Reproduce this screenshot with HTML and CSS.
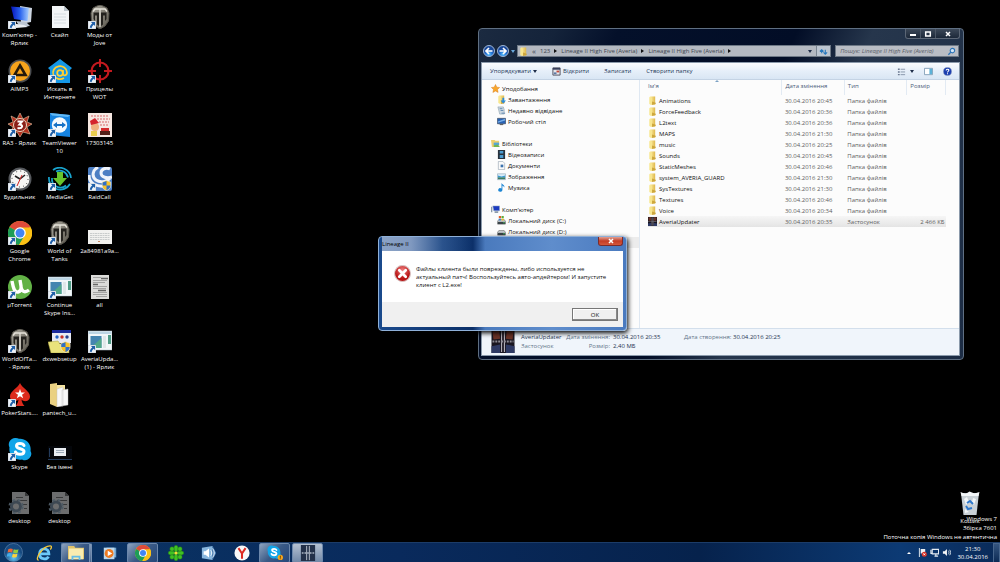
FILE: index.html
```
<!DOCTYPE html>
<html lang="uk">
<head>
    <meta charset="UTF-8">
    <meta name="viewport" content="width=device-width, initial-scale=1.0">
    <title>Робочий стіл</title>
    <link rel="stylesheet" href="styles.css">
</head>
<body>
    <!-- Shared icons -->
    <svg class="defs" width="0" height="0" aria-hidden="true">
        <defs>
            <linearGradient id="gFolder" x1="0" x2="1"><stop offset="0" stop-color="#fff0a8"/><stop offset="1" stop-color="#dfb84a"/></linearGradient>
            <linearGradient id="gScreen" x1="0" x2="1"><stop offset="0" stop-color="#0613b8"/><stop offset=".5" stop-color="#2a63ee"/><stop offset="1" stop-color="#a9d0ff"/></linearGradient>
            <linearGradient id="gSteel" x1="0" x2="1" y2="1"><stop offset="0" stop-color="#a9a69c"/><stop offset="1" stop-color="#5d594f"/></linearGradient>
            <radialGradient id="gBlue" cy=".8"><stop offset="0" stop-color="#5cc4ff"/><stop offset=".6" stop-color="#2270d4"/><stop offset="1" stop-color="#1a4898"/></radialGradient>
            <radialGradient id="gStart" cy=".8"><stop offset="0" stop-color="#5fc4f4"/><stop offset="1" stop-color="#174a80"/></radialGradient>
            <radialGradient id="gRed" cy=".3"><stop offset="0" stop-color="#f08080"/><stop offset="1" stop-color="#b81414"/></radialGradient>
        </defs>
        <symbol id="shortcut" viewBox="0 0 8 8"><path fill="#eef3f8" stroke="#9aa6b4" stroke-width=".5" d="M0 0h8v8H0z"/><path fill="#1f5fa8" d="M3 1h4v4L5.700 3.800C4.500 4.800 4 5.600 3.600 7.200L1.700 6.600C2 4.800 2.900 3.500 4.300 2.400z"/></symbol>
        <symbol id="tank" viewBox="0 0 24 24"><path fill="url(#gSteel)" stroke="#55524a" d="M5 3l4-2 3-1 3 1 4 2 2 5-.5 8-3.500 5L12 24l-5-3-3.500-5L3 8z"/><path fill="#24221e" d="M5.500 7.500H11V21l-2-1.500V10.500H7V16l-1.500-2zM18.500 7.500H13V21l2-1.500V10.500h2V16l1.500-2z"/><path stroke="#e6e3da" stroke-width="1.300" d="M5 6.500l2-2.500h10l2 2.500M12 4v18" fill="none"/></symbol>
        <symbol id="chrome" viewBox="0 0 24 24"><circle cx="12" cy="12" r="12" fill="#fbc116"/><path fill="#de4a3a" d="M12 12L1.600 6A12 12 0 0 1 22.400 6z"/><path fill="#1d9d58" d="M1.600 6A12 12 0 0 0 11 24l6-9-5-3z"/><path fill="#fbc116" d="M12 6.500h10.700A12 12 0 0 1 11 24l5.500-9.500z"/><circle cx="12" cy="12" r="5.800" fill="#fff"/><circle cx="12" cy="12" r="4.500" fill="#4285f4"/></symbol>
        <symbol id="skype" viewBox="0 0 24 24"><path fill="#12a5e8" d="M7 1a6 6 0 0 1 4 .8A10.500 10.500 0 0 1 22.500 14 6.300 6.300 0 0 1 14 22.500 10.500 10.500 0 0 1 1.500 10.500 6.500 6.500 0 0 1 7 1z"/><path fill="none" stroke="#fff" stroke-width="3" stroke-linecap="round" d="M16 8.500C15 6 8.500 5.500 8.500 9c0 3.500 7.500 2 7.500 5.500 0 3.800-7.500 3.500-8.500.5"/></symbol>
        <symbol id="appwin" viewBox="0 0 24 24"><path fill="#f2f7f9" stroke="#aebfc9" stroke-width=".5" d="M0 2h24v19H0z"/><path fill="#bcd5e4" d="M.5 2.500h23v2.500H.5z"/><path fill="#4585b0" d="M2.500 7h11v12h-11z"/><path fill="#52a889" d="M2.500 19L13.500 9v10z"/><path fill="#dfe7e9" d="M15 7h3v12h-3z"/><path fill="#4f9c86" d="M20 6h3v9h-3z"/></symbol>
        <symbol id="shield" viewBox="0 0 12 13"><path fill="#f6c22a" stroke="#e8edf2" stroke-width=".7" d="M6 .5l5 2v4c0 3-2 5-5 6-3-1-5-3-5-6v-4z"/><path fill="#2f6fc8" d="M6 1.200v5.300H1.400v-3.600zM6 6.500h4.600C10.500 9 9 11 6 12z"/></symbol>
        <symbol id="gearfile" viewBox="0 0 24 24"><path fill="#b4b6b8" d="M4 1h13l4 4v18H4z"/><path fill="#5e6062" d="M17 1v4h4zM8 6h7v1H8zM9 9h10v1H9zM14 13h5v1h-5zM16 17h3v1h-3z"/><circle cx="8" cy="15.500" r="4.500" fill="none" stroke="#66798a" stroke-width="3"/><circle cx="8" cy="15.500" r="6.700" fill="none" stroke="#8196a8" stroke-width="1.800" stroke-dasharray="2.700 2.800"/></symbol>
        <symbol id="folder" viewBox="0 0 10 10"><path fill="url(#gFolder)" d="M2 .5h6v9H2z"/><path fill="#f8e68e" d="M1.500 1l3 1v8l-3-1z"/><path fill="#cda63c" d="M4.500 6l4 1.500V9L4.500 10z"/></symbol>
        <symbol id="lineage" viewBox="0 0 24 24"><path fill="#1a1620" d="M0 0h24v24H0z"/><path fill="#6a3226" d="M1 1l7-1 1 9-7 1zM23 1l-7-1-1 9 7 1z"/><path fill="#2f3a64" d="M0 17l9-2v9H0zM24 17l-9-2v9h9z"/><path stroke="#b0acb4" stroke-width="1.200" d="M10.500 1v22M13.500 1v22"/><path stroke="#8d8b94" stroke-dasharray="2 1" stroke-width="2" d="M1 12h22"/></symbol>
        <symbol id="disk" viewBox="0 0 10 10"><path fill="#c9ced2" stroke="#555" stroke-width=".6" d="M.5 6l1.500-2h6l1.500 2v3h-9z"/><path fill="#3a4348" d="M1 6.500h8V9H1z"/><path fill="#48d05a" d="M7 7h1.500v1H7z"/></symbol>
    </svg>

    <main class="desktop">
        <!-- Desktop shortcuts, filled column by column -->
        <div class="shortcuts">
            <a class="shortcut" href="#"><span class="pic"><svg class="big" viewBox="0 0 24 24"><path fill="#cdd6e2" d="M12 1l12 2-1 14-10 2z"/><path fill="url(#gScreen)" d="M3 1.500l18 1.500-1.500 13L6 14z"/><path fill="#bcc6d2" d="M8 16l10 1 4 4-10 1z"/><path fill="#e8edf2" d="M2 18l14 2 4 2-12 1z"/></svg><svg class="arrow"><use href="#shortcut"/></svg></span>Комп'ютер - Ярлик</a>
            <a class="shortcut" href="#"><span class="pic"><svg class="big" viewBox="0 0 24 24"><circle cx="12" cy="12" r="11.500" fill="#4b4d50"/><circle cx="12" cy="12" r="10" fill="#f7a41c"/><path fill="none" stroke="#241a0c" stroke-width="2.600" d="M12 6.500L17.500 16h-11z"/></svg><svg class="arrow"><use href="#shortcut"/></svg></span>AIMP3</a>
            <a class="shortcut" href="#"><span class="pic"><svg class="big" viewBox="0 0 24 24"><path fill="#b3311f" stroke="#e8c9a8" stroke-width=".6" d="M12 0l3 6 6-3-2 6 5 2-5 3 3 7-7-2-3 5-3-5-7 2 3-7-5-3 5-2-2-6 6 3z"/><circle cx="12" cy="12" r="6.500" fill="#8b1f18" stroke="#ead8c0"/><path fill="none" stroke="#fff" stroke-width="2" d="M9.500 8.500h4.500l-2.500 3c4 0 3.500 4.500-2 3.500"/></svg><svg class="arrow"><use href="#shortcut"/></svg></span>RA3 - Ярлик</a>
            <a class="shortcut" href="#"><span class="pic"><svg class="big" viewBox="0 0 24 24"><circle cx="12" cy="12" r="11.500" fill="#55585c"/><circle cx="12" cy="12" r="9.500" fill="#f6f6f4"/><circle cx="12" cy="12" r="8" fill="none" stroke="#333" stroke-dasharray="1 3.190"/><path stroke="#222" stroke-width="1.600" d="M12 12L7 9M12 12l5-4"/><path stroke="#d02020" d="M14 8l-5 11"/></svg><svg class="arrow"><use href="#shortcut"/></svg></span>Будильник</a>
            <a class="shortcut" href="#"><span class="pic"><svg class="big"><use href="#chrome"/></svg><svg class="arrow"><use href="#shortcut"/></svg></span>Google Chrome</a>
            <a class="shortcut" href="#"><span class="pic"><svg class="big" viewBox="0 0 24 24"><circle cx="12" cy="12" r="12" fill="#62b246"/><path fill="none" stroke="#fff" stroke-width="3.400" d="M4 6c1 5 2 12 6 11 3-.8 3.500-3 3-6l-1-6M13 12c1 5 4 6 8 3"/></svg><svg class="arrow"><use href="#shortcut"/></svg></span>µTorrent</a>
            <a class="shortcut" href="#"><span class="pic"><svg class="big"><use href="#tank"/></svg><svg class="arrow"><use href="#shortcut"/></svg></span>WorldOfTa...<br>- Ярлик</a>
            <a class="shortcut" href="#"><span class="pic"><svg class="big" viewBox="0 0 24 24"><path fill="#dd2a1c" d="M12 0c2 5 10 8 10 13.500 0 5-6 6-8.500 3 .3 3 1.500 5 3 6.500h-9c1.500-1.500 2.700-3.500 3-6.500-2.500 3-8.500 2-8.500-3C2 8 10 5 12 0z"/><path fill="#fff" d="M12 6l1.300 3.500H17l-3 2.200 1.200 3.600-3.200-2.100-3.200 2.100L10 11.700 7 9.500h3.700z"/></svg><svg class="arrow"><use href="#shortcut"/></svg></span>PokerStars....</a>
            <a class="shortcut" href="#"><span class="pic"><svg class="big"><use href="#skype"/></svg><svg class="arrow"><use href="#shortcut"/></svg></span>Skype</a>
            <a class="shortcut dim" href="#"><span class="pic"><svg class="big"><use href="#gearfile"/></svg></span>desktop</a>

            <a class="shortcut" href="#"><span class="pic"><svg class="big" viewBox="0 0 24 24"><path fill="#f2f5f7" d="M4 1h12l5 5v17H4z"/><path fill="#bcc5cc" d="M16 1v5h5z"/><path stroke="#d5dce1" d="M6 9h12M6 12h12M6 15h12M6 18h12"/></svg></span>Скайп</a>
            <a class="shortcut" href="#"><span class="pic"><svg class="big" viewBox="0 0 24 24"><path fill="#1497e6" d="M12 0l12 9-2 2v13H2V11L0 9z"/><circle cx="12" cy="14" r="2.800" fill="none" stroke="#ffcf32" stroke-width="1.700"/><path fill="none" stroke="#ffcf32" stroke-width="1.700" d="M15 11v4c0 2 4 2 4-1.500a7 6.500 0 1 0-3 5.500"/></svg><svg class="arrow"><use href="#shortcut"/></svg></span>Искать в Интернете</a>
            <a class="shortcut" href="#"><span class="pic"><svg class="big" viewBox="0 0 24 24"><path fill="#1583e0" d="M2 0l20 2v22L2 22z"/><path fill="#62b9f5" d="M2 0l20 2-2 2L4 2.500z"/><circle cx="11.500" cy="12" r="7.700" fill="#f4fafe"/><path fill="#1672c6" d="M5 12l4-3v2h5V9l4 3-4 3v-2H9v2z"/></svg><svg class="arrow"><use href="#shortcut"/></svg></span>TeamViewer 10</a>
            <a class="shortcut" href="#"><span class="pic"><svg class="big" viewBox="0 0 24 24"><g fill="none" stroke="#19a4ce" stroke-width="1.700"><path d="M5 3a11.300 11.300 0 0 1 18 8M22 17A11.300 11.300 0 0 1 1 10"/><path d="M8 4.500a8.500 8.500 0 0 1 12 6M18 18.500A8.500 8.500 0 0 1 4 11"/></g><path fill="#67c42c" d="M9 5h6v6h4l-7 8-7-8h4z"/></svg><svg class="arrow"><use href="#shortcut"/></svg></span>MediaGet</a>
            <a class="shortcut" href="#"><span class="pic"><svg class="big"><use href="#tank"/></svg><svg class="arrow"><use href="#shortcut"/></svg></span>World of Tanks</a>
            <a class="shortcut" href="#"><span class="pic"><svg class="big"><use href="#appwin"/></svg><svg class="arrow"><use href="#shortcut"/></svg></span>Continue Skype Ins...</a>
            <a class="shortcut" href="#"><span class="pic"><svg class="big" viewBox="0 0 24 24"><path fill="#e8eaf2" d="M4 1h19v13H4z"/><path fill="#1b2a9c" d="M4 1h19v3H4z"/><circle cx="9" cy="8" r="1.700" fill="#2464c8"/><circle cx="14" cy="8" r="1.700" fill="#c83028"/><circle cx="19" cy="8" r="1.700" fill="#25408c"/><path fill="#e9e27c" stroke="#a79f3c" stroke-width=".5" d="M0 13l10-1 2 3h9v9H3z"/><svg x="12" y="12" width="11" height="12"><use href="#shield"/></svg></svg></span>dxwebsetup</a>
            <a class="shortcut" href="#"><span class="pic"><svg class="big" viewBox="0 0 24 24"><path fill="#ead182" d="M2 1l7-1v24l-7-3z"/><path fill="#f6e4a0" d="M9 2h8v18l-8 4z"/><path fill="#f8f8f8" stroke="#bbb" stroke-width=".4" d="M9 6l6-2v19l-6 1zM14 7l6-1v16l-6 1z"/></svg></span>pantech_u...</a>
            <a class="shortcut" href="#"><span class="pic"><svg class="big" viewBox="0 0 24 24"><path fill="#04060a" d="M0 9h24v13H0z"/><path fill="#e9edf2" d="M6 11h12v8H6z"/><path fill="#9eabb9" d="M8 13h8v1H8zM8 15h8v1H8z"/><path fill="#243c5c" d="M0 22h24v1H0zM1 11h1v9H1z"/></svg></span>Без імені</a>
            <a class="shortcut dim" href="#"><span class="pic"><svg class="big"><use href="#gearfile"/></svg></span>desktop</a>

            <a class="shortcut" href="#"><span class="pic"><svg class="big"><use href="#tank"/></svg><svg class="arrow"><use href="#shortcut"/></svg></span>Моды от<br>Jove</a>
            <a class="shortcut" href="#"><span class="pic"><svg class="big" viewBox="0 0 24 24"><g fill="none" stroke="#c3191e"><circle cx="12" cy="12" r="8.500" stroke-width="2.200"/><path stroke-width="2" d="M12 0v8M12 16v8M0 12h8M16 12h8"/></g></svg><svg class="arrow"><use href="#shortcut"/></svg></span>Прицелы WOT</a>
            <a class="shortcut" href="#"><span class="pic"><svg class="big" viewBox="0 0 24 24"><path fill="#f6e8e2" d="M0 0h24v24H0z"/><path stroke="#d8686a" stroke-width="1.200" stroke-dasharray="2 1" d="M3 3h17M9 6h13M11 9h10M12 12h9"/><circle cx="7" cy="14" r="4" fill="#efb17e"/><path fill="#d4242c" d="M2 8l5-3 4 5-8 2z"/><path fill="#d32c2c" d="M13 15h8v4h-8z"/><path fill="#542018" d="M12 18h10v4H12z"/><path fill="#e8cd4f" d="M3 18h6v5H3z"/></svg></span>17303145</a>
            <a class="shortcut" href="#"><span class="pic"><svg class="big" viewBox="0 0 24 24"><rect width="24" height="24" rx="2" fill="#4d7fc4"/><path fill="none" stroke="#f0f4fb" stroke-width="3" d="M10 0C5 3 3 9 8 13c4 3 11 2 14-2M22 2c-4-2-9 0-9 4s6 6 11 4M1 8c0 9 8 12 16 11"/><svg x="13" y="13" width="11" height="11"><use href="#shield"/></svg></svg><svg class="arrow"><use href="#shortcut"/></svg></span>RaidCall</a>
            <a class="shortcut" href="#"><span class="pic"><svg class="big" viewBox="0 0 24 24"><path fill="#f1f1ef" d="M0 9h24v14H0z"/><path stroke="#c9cccc" stroke-dasharray="2 .5" d="M2 12.500h20M2 14.500h20M2 16.500h20M2 18.500h20"/><path fill="#c88b6a" d="M10 20h2v1h-2z"/></svg></span>2a84981a9a...</a>
            <a class="shortcut" href="#"><span class="pic"><svg class="big" viewBox="0 0 24 24"><path fill="#dcdcda" d="M3 0h18v24H3z"/><path stroke="#a4a4a3" d="M5 2.500h8M5 5.500h14M5 7.500h12M5 11.500h14M5 13.500h13M5 17.500h14M5 19.500h14M8 21.500h11"/><path stroke="#666" stroke-width="1.500" d="M13 3.500h7M5 9.500h5M10 15.500h8"/></svg></span>all</a>
            <a class="shortcut" href="#"><span class="pic"><svg class="big"><use href="#appwin"/></svg><svg class="arrow"><use href="#shortcut"/></svg></span>AveriaUpda... (1) - Ярлик</a>
        </div>

        <a class="shortcut bin" href="#"><span class="pic"><svg class="big" viewBox="0 0 24 24"><path fill="#c8d0d6" d="M3 2h18l-2.500 22h-13z"/><path fill="#f3f6f8" d="M2.500 1l5 2 4-2.500 5 2 5-1.500-1 4h-17zM6 8l3-2 2 5-3 3zM15 7l3 1-2 6-2-3zM7 18l4 3-4 1z"/><path fill="none" stroke="#2e78cc" stroke-width="2" d="M9 12l3-2 3 3M14 17l-4 1-2-3"/></svg></span>Кошик</a>

        <div class="watermark">Windows 7<br>Збірка 7601<br>Поточна копія Windows не автентична</div>

        <!-- Explorer window -->
        <section class="window explorer" aria-label="Lineage II High Five (Averia)">
            <div class="controls">
                <button aria-label="Згорнути"><svg viewBox="0 0 10 8"><path fill="#fff" d="M2 4h6v2H2z"/></svg></button>
                <button aria-label="Розгорнути"><svg viewBox="0 0 10 8"><path fill="none" stroke="#fff" stroke-width="1.500" d="M2.700 2h4.600v4H2.700z"/></svg></button>
                <button class="wide" aria-label="Закрити"><svg viewBox="0 0 10 8"><path stroke="#fff" stroke-width="1.500" d="M3 2l4 4M7 2L3 6"/></svg></button>
            </div>
            <div class="nav">
                <button class="round" aria-label="Назад"><svg viewBox="0 0 12 12"><circle cx="6" cy="6" r="5.500" fill="url(#gBlue)" stroke="#9fb6d4"/><path fill="none" stroke="#fff" stroke-width="1.700" d="M9.500 6H3.500M6 3L3 6l3 3"/></svg></button>
                <button class="round" aria-label="Вперед"><svg viewBox="0 0 12 12"><circle cx="6" cy="6" r="5.500" fill="url(#gBlue)" stroke="#9fb6d4"/><path fill="none" stroke="#fff" stroke-width="1.700" d="M2.500 6h6M6 3l3 3-3 3"/></svg></button>
                <span class="tri light"></span>
                <div class="address">
                    <svg class="ico"><use href="#folder"/></svg>
                    <span class="more">«</span>
                    <a href="#">123</a><i class="sep"></i>
                    <a href="#">Lineage II High Five (Averia)</a><i class="sep"></i>
                    <a href="#">Lineage II High Five (Averia)</a><i class="sep"></i>
                    <span class="tri end"></span>
                    <button class="refresh" aria-label="Оновити"><svg viewBox="0 0 10 10"><path fill="none" stroke="#2677bd" stroke-width="1.200" d="M3 7V3M1 5l2-2 2 2M7 3v4M5 6l2 2 2-2"/></svg></button>
                </div>
                <label class="search">
                    <input type="text" placeholder="Пошук: Lineage II High Five (Averia)" aria-label="Пошук">
                    <svg viewBox="0 0 10 10"><circle cx="6" cy="4" r="2.500" fill="#d4e6f6" stroke="#2e75b8" stroke-width="1.200"/><path stroke="#2e75b8" stroke-width="1.500" d="M4.300 5.700L1.500 8.500"/></svg>
                </label>
            </div>
            <div class="inner">
                <div class="toolbar">
                    <button>Упорядкувати <span class="tri"></span></button>
                    <button><svg class="ico" viewBox="0 0 10 10"><path fill="#e4e7ec" stroke="#4a4a58" d="M1 1h8v8H1z"/><path fill="#38405c" d="M1 1h8v2H1z"/><path fill="#c44a3c" d="M5 4h3v2H5z"/><path fill="#5c78a4" d="M2 6h3v2H2z"/></svg>Відкрити</button>
                    <button>Записати</button>
                    <button>Створити папку</button>
                    <div class="tools">
                        <button aria-label="Вигляд"><svg class="ico" viewBox="0 0 10 10"><path stroke="#8291a6" d="M4 2.500h5M4 5.500h5M4 8.500h5"/><path stroke="#6a7890" stroke-width="1.500" d="M1 2.500h2M1 5.500h2M1 8.500h2"/></svg><span class="tri view"></span></button>
                        <button aria-label="Область перегляду"><svg class="ico" viewBox="0 0 10 10"><path fill="#fff" stroke="#7f9cb4" d="M.5 1.500h9v7h-9z"/><path fill="#5cb2d8" d="M6 2h3v6H6z"/></svg></button>
                        <button aria-label="Довідка"><svg class="ico" viewBox="0 0 10 10"><circle cx="5" cy="5" r="4.500" fill="#1c3fb0" stroke="#8a9ac0" stroke-width=".6"/><path fill="none" stroke="#fff" stroke-width="1.200" d="M3.500 4c0-2 3-2 3-.3C6.500 5 5 4.800 5 6M5 7v1"/></svg></button>
                    </div>
                </div>
                <div class="panes">
                    <nav class="tree">
                        <ul>
                            <li class="group"><svg class="ico" viewBox="0 0 10 10"><path fill="#f8a72c" stroke="#d87a18" stroke-width=".5" d="M5 .5l1.400 3 3.200.4-2.400 2.200.7 3.300L5 7.800 2.100 9.400l.7-3.300L.4 3.900l3.200-.4z"/></svg>Уподобання</li>
                            <li><svg class="ico" viewBox="0 0 10 10"><use href="#folder"/><path fill="#2b8cdc" d="M6 3h2v3h2L7 9.500 4 6h2z"/></svg>Завантаження</li>
                            <li><svg class="ico" viewBox="0 0 10 10"><path fill="#cdd9e2" stroke="#8598a8" stroke-width=".6" d="M1 1h6l1 3v5H3z"/><path stroke="#5d87b0" d="M3 3h3M4 5h3M5 8h4"/></svg>Недавно відвідане</li>
                            <li><svg class="ico" viewBox="0 0 10 10"><path fill="#2762b4" stroke="#35435a" stroke-width=".7" d="M.5 1.500h9v6h-9z"/><path fill="#78aee8" d="M1 5l8-3v2L1 6.500z"/><path fill="#444" d="M3 8h4v1H3z"/></svg>Робочий стіл</li>
                        </ul>
                        <ul>
                            <li class="group"><svg class="ico" viewBox="0 0 10 10"><path fill="#edce6c" d="M0 1h4l1 1h4v7H1z"/><path fill="#54a6d8" d="M3 4h6v3H3z"/><path fill="#72b452" d="M3 7l4-1 3 3H3z"/></svg>Бібліотеки</li>
                            <li><svg class="ico" viewBox="0 0 10 10"><path fill="#28323c" d="M1 0h8v10H1z"/><path fill="#4b9cd0" d="M3 1h4v3H3zM3 5.500h4v3.500H3z"/></svg>Відеозаписи</li>
                            <li><svg class="ico" viewBox="0 0 10 10"><path fill="#fafafa" stroke="#8796a5" stroke-width=".6" d="M1.500.5h5l2 2v7h-7z"/><path fill="#3c72ae" d="M4 4h3v3H4z"/></svg>Документи</li>
                            <li><svg class="ico" viewBox="0 0 10 10"><path fill="#dcedf8" stroke="#849caf" stroke-width=".6" d="M.5 2h9v6.500h-9z"/><path fill="#3a9bd4" d="M1 4l4 1 4-1v2H1z"/><path fill="#3c7c60" d="M1 6h8v2H1z"/></svg>Зображення</li>
                            <li><svg class="ico" viewBox="0 0 10 10"><path fill="#1d86d4" d="M5 0c1 2 4 2 3 5-.5-1.500-1.200-2-2-2v4.500A2.300 2 0 1 1 5 6z"/></svg>Музика</li>
                        </ul>
                        <ul>
                            <li class="group"><svg class="ico" viewBox="0 0 10 10"><path fill="#1c3bc0" stroke="#9fb0c4" stroke-width=".6" d="M2 1h7.500v5.500H3z"/><path fill="#8b9aac" d="M0 2h1.500v6H0zM4 7h4v2H4z"/></svg>Комп'ютер</li>
                            <li><svg class="ico" viewBox="0 0 10 10"><use href="#disk"/><path fill="#e05c28" d="M2 0h2.500v2.500H2z"/><path fill="#5bab3a" d="M5 0h2.500v2.500H5z"/><path fill="#3b83d4" d="M2 3h2.500v2H2z"/><path fill="#eeb82a" d="M5 3h2.500v2H5z"/></svg>Локальний диск (C:)</li>
                            <li><svg class="ico"><use href="#disk"/></svg>Локальний диск (D:)</li>
                            <li class="current"></li>
                        </ul>
                    </nav>
                    <div class="files">
                        <table>
                            <colgroup><col class="c-name"><col class="c-date"><col class="c-type"><col class="c-size"></colgroup>
                            <thead>
                                <tr><th>Ім'я<span class="sort"></span></th><th>Дата змінення</th><th>Тип</th><th>Розмір</th></tr>
                            </thead>
                            <tbody>
                                <tr><td><svg class="ico"><use href="#folder"/></svg>Animations</td><td>30.04.2016 20:45</td><td>Папка файлів</td><td></td></tr>
                                <tr><td><svg class="ico"><use href="#folder"/></svg>ForceFeedback</td><td>30.04.2016 20:36</td><td>Папка файлів</td><td></td></tr>
                                <tr><td><svg class="ico"><use href="#folder"/></svg>L2text</td><td>30.04.2016 20:36</td><td>Папка файлів</td><td></td></tr>
                                <tr><td><svg class="ico"><use href="#folder"/></svg>MAPS</td><td>30.04.2016 21:30</td><td>Папка файлів</td><td></td></tr>
                                <tr><td><svg class="ico"><use href="#folder"/></svg>music</td><td>30.04.2016 20:25</td><td>Папка файлів</td><td></td></tr>
                                <tr><td><svg class="ico"><use href="#folder"/></svg>Sounds</td><td>30.04.2016 20:45</td><td>Папка файлів</td><td></td></tr>
                                <tr><td><svg class="ico"><use href="#folder"/></svg>StaticMeshes</td><td>30.04.2016 20:46</td><td>Папка файлів</td><td></td></tr>
                                <tr><td><svg class="ico"><use href="#folder"/></svg>system_AVERIA_GUARD</td><td>30.04.2016 21:30</td><td>Папка файлів</td><td></td></tr>
                                <tr><td><svg class="ico"><use href="#folder"/></svg>SysTextures</td><td>30.04.2016 21:30</td><td>Папка файлів</td><td></td></tr>
                                <tr><td><svg class="ico"><use href="#folder"/></svg>Textures</td><td>30.04.2016 20:46</td><td>Папка файлів</td><td></td></tr>
                                <tr><td><svg class="ico"><use href="#folder"/></svg>Voice</td><td>30.04.2016 20:34</td><td>Папка файлів</td><td></td></tr>
                                <tr class="selected"><td><svg class="ico"><use href="#lineage"/></svg>AveriaUpdater</td><td>30.04.2016 20:35</td><td>Застосунок</td><td>2 466 КБ</td></tr>
                            </tbody>
                        </table>
                    </div>
                </div>
                <footer class="details">
                    <svg class="thumb"><use href="#lineage"/></svg>
                    <div class="facts">
                        <strong>AveriaUpdater</strong>
                        <span class="key">Дата змінення:</span><span>30.04.2016 20:35</span>
                        <span class="key">Дата створення:</span><span>30.04.2016 20:25</span>
                        <span class="kind">Застосунок</span>
                        <span class="key">Розмір:</span><span>2,40 МБ</span>
                    </div>
                </footer>
            </div>
        </section>

        <!-- Error message -->
        <section class="window dialog" role="alertdialog" aria-labelledby="dlg-title" aria-describedby="dlg-text">
            <header class="titlebar">
                <h1 id="dlg-title">Lineage II</h1>
                <button class="close" aria-label="Закрити"><svg viewBox="0 0 10 8"><path stroke="#fff" stroke-width="1.500" d="M3 2l4 4M7 2L3 6"/></svg></button>
            </header>
            <div class="message">
                <svg class="error" viewBox="0 0 16 16"><circle cx="8" cy="8" r="7.500" fill="url(#gRed)" stroke="#d8c4c4"/><path stroke="#fff" stroke-width="2.600" stroke-linecap="round" d="M5 5l6 6M11 5l-6 6"/></svg>
                <p id="dlg-text">Файлы клиента были повреждены, либо используется не<br>актуальный патч! Воспользуйтесь авто-апдейтером! И запустите<br>клиент с L2.exe!</p>
            </div>
            <div class="actions"><button>OK</button></div>
        </section>
    </main>

    <!-- Taskbar -->
    <footer class="taskbar">
        <button class="start" aria-label="Пуск"><svg viewBox="0 0 20 20"><circle cx="10" cy="10" r="9.500" fill="url(#gStart)" stroke="#5d84ac" stroke-width=".7"/><path fill="#ee6535" d="M4.500 6.500c2-1 3-1 4.800-.2L8.500 10c-2-.8-3-.7-4.700 0z"/><path fill="#96cc3e" d="M10.300 6.600c2 .8 3.200.7 5 0l-.9 3.600c-1.800.8-3 .7-4.900-.1z"/><path fill="#45aeea" d="M3.600 11c1.800-.8 3-.8 4.700 0l-.9 3.500c-1.700-.8-2.800-.7-4.600 0z"/><path fill="#fcd23c" d="M9.300 11.300c1.800.7 3 .7 4.900 0l-.9 3.500c-1.800.7-3 .8-4.900 0z"/></svg></button>
        <button aria-label="Internet Explorer"><svg viewBox="0 0 18 18"><path fill="none" stroke="#6cc8f8" stroke-width="3.200" d="M4 10h10.500C14.500 2.500 4 2.500 4 10c0 6.500 8 7 10 3"/><path fill="none" stroke="#f4c83c" stroke-width="1.500" d="M3 17C-2 17 7 1 16 1c2.500 0 1 3 0 4"/></svg></button>
        <button class="open stack" aria-label="Провідник"><svg viewBox="0 0 18 18"><path fill="#e2c46a" d="M0 1h7l1 2h10v13H0z"/><path fill="#f9ecb0" d="M1 4h16v12H1z"/><path fill="#65bde8" d="M4 12h10v5h-2v-3H6v3H4z"/></svg></button>
        <button aria-label="Windows Media"><svg viewBox="0 0 18 18"><path fill="#6fa6d2" d="M5 3h11v11H5z"/><path fill="#bcd8ec" d="M2 3h12v13H2z"/><circle cx="8" cy="9.500" r="5" fill="#ee7b22"/><path fill="#fff" d="M6.500 6.500l5 3-5 3z"/></svg></button>
        <button class="open" aria-label="Google Chrome"><svg><use href="#chrome"/></svg></button>
        <button aria-label="ICQ"><svg viewBox="0 0 18 18"><g fill="#3fc024" stroke="#1c6e14" stroke-width=".5"><ellipse cx="9" cy="4" rx="2.400" ry="3.800"/><ellipse cx="9" cy="14" rx="2.400" ry="3.800"/><ellipse cx="4" cy="9" rx="3.800" ry="2.400"/><ellipse cx="14" cy="9" rx="3.800" ry="2.400"/><circle cx="4.500" cy="4.500" r="2.500"/><circle cx="13.500" cy="4.500" r="2.500"/><circle cx="4.500" cy="13.500" r="2.500"/><circle cx="13.500" cy="13.500" r="2.500"/></g><circle cx="9" cy="9" r="1.800" fill="#f4dc38"/></svg></button>
        <button aria-label="Звук"><svg viewBox="0 0 18 18"><path fill="#88b6de" d="M1 3l12-2v16L1 15z"/><path fill="#5288c0" d="M13 1l4 8-4 8z"/><path fill="#fff" d="M3 7h2l4-3v10l-4-3H3z"/><path fill="none" stroke="#fff" d="M11 6c1.500 2 1.500 4 0 6M13 4c2.500 3 2.500 7 0 10"/></svg></button>
        <button aria-label="Yandex"><svg viewBox="0 0 18 18"><circle cx="9" cy="9" r="8.500" fill="#f8f8f8"/><path fill="none" stroke="#dd2a22" stroke-width="2.300" d="M5 3.500l4 6 4-6M9 9v6.500"/></svg></button>
        <button class="open" aria-label="Skype"><svg viewBox="0 0 18 18"><use href="#skype" width="16" height="16"/><circle cx="15" cy="14" r="3" fill="#f5a51c"/><path stroke="#5c3a04" d="M15 12v2.500M15 15v1"/></svg></button>
        <button class="open active" aria-label="Lineage II"><svg viewBox="0 0 18 18"><path fill="#223049" d="M1 0h16v18H1z"/><path stroke="#c4ccd8" d="M7.500 1v16M10.500 1v16"/><path stroke="#aab4c4" stroke-width="1.500" stroke-dasharray="2 1" d="M2 9h14"/></svg></button>
        <span class="grow"></span>
        <div class="tray">
            <span class="up"></span>
            <svg viewBox="0 0 10 10"><path fill="#eef2f6" d="M1 0h1v10H1zM3 1h5v5H3z"/><circle cx="7" cy="7" r="2.800" fill="#d83328"/><path stroke="#fff" d="M6 6l2 2M8 6L6 8"/></svg>
            <svg viewBox="0 0 10 10"><path fill="none" stroke="#e6ecf2" stroke-width="1.200" d="M2.500 1.500h7v5h-7zM5 9h4M6.500 7v2M1 2v4h2"/></svg>
            <svg viewBox="0 0 10 10"><path fill="#f4f6f8" d="M1 3.500h2L5.500 1v8L3 6.500H1z"/><path fill="none" stroke="#dbe4ec" d="M7 3c1 1.300 1 2.700 0 4M8.500 2c1.500 2 1.500 4 0 6"/></svg>
        </div>
        <time class="clock">21:30<br>30.04.2016</time>
        <button class="peek" aria-label="Показати робочий стіл"></button>
    </footer>
</body>
</html>
```

FILE: styles.css
```
* {
    box-sizing: border-box;
}
body {
    margin: 0;
    height: 100vh;
    display: flex;
    flex-direction: column;
    overflow: hidden;
    background-color: #000;
    font-family: "Open Sans", "Noto Sans", sans-serif;
    font-size: 6px;
    line-height: 8px;
    color: #111;
}
button, input {
    font: inherit;
    color: inherit;
    margin: 0;
    padding: 0;
    border: 0;
    background: none;
}
a {
    color: inherit;
    text-decoration: none;
}
svg {
    display: block;
    flex: none;
}
ul {
    list-style: none;
    margin: 0;
    padding: 0;
}
.defs {
    position: absolute;
}
.grow {
    flex: 1;
}
.ico {
    width: 9px;
    height: 9px;
}
.tri {
    display: inline-block;
    border: 2px solid transparent;
    border-top: 3px solid #1e2d48;
    border-bottom: 0;
}

/* Desktop */
.desktop {
    position: relative;
    flex: 1;
    min-height: 0;
}
.shortcuts {
    display: grid;
    grid-auto-flow: column;
    grid-template-rows: repeat(10, 54px);
    grid-auto-columns: 39px;
    column-gap: 1px;
    padding-top: 5px;
}
.shortcut {
    display: flex;
    flex-direction: column;
    align-items: center;
    text-align: center;
    color: #fff;
    text-shadow: 0 1px 1px #000;
}
/* icon, then the name split over two lines */
.shortcut br {
    line-height: 8px;
}
.pic {
    position: relative;
    margin-bottom: 2px;
}
.big {
    width: 24px;
    height: 24px;
}
.arrow {
    position: absolute;
    left: 0;
    bottom: 0;
    width: 8px;
    height: 8px;
}
.dim .pic {
    opacity: 0.6;
}
.bin {
    position: absolute;
    right: 18px;
    bottom: 17px;
}
.watermark {
    position: absolute;
    right: 3px;
    bottom: 0;
    color: #fff;
    text-align: right;
    line-height: 9px;
    text-shadow: 0 0 1px #000;
}

/* Windows */
.window {
    position: absolute;
    display: flex;
    flex-direction: column;
    border-radius: 4px;
}
.explorer {
    left: 478px;
    top: 28px;
    width: 486px;
    height: 332px;
    padding: 0 3px 3px 2px;
    border: 1px solid #5f6f82;
    background: linear-gradient(115deg, #1b2a40 0, #14233a 12%, #04102a 22%, #020d26 50%, #26364c 62%, #1c2c44 100%);
}
.controls {
    display: flex;
    align-self: flex-end;
    border: 1px solid #5b6675;
    border-top: 0;
    border-radius: 0 0 3px 3px;
    background: linear-gradient(#3c4858, #1c2839);
}
.controls button {
    width: 15px;
    height: 9px;
    display: grid;
    place-items: center;
    border-right: 1px solid #4b5665;
}
.controls button svg {
    width: 10px;
    height: 8px;
}
.controls .wide {
    width: 23px;
    border: 0;
}
.nav {
    display: flex;
    align-items: center;
    gap: 2px;
    height: 23px;
    padding: 1px 1px 0 2px;
    color: #3e464f;
}
.round svg {
    width: 12px;
    height: 12px;
}
.light {
    border-top-color: #6aa9dc;
}
.address {
    flex: 1;
    display: flex;
    align-items: center;
    gap: 4px;
    height: 12px;
    padding-left: 1px;
    border: 1px solid #6d7885;
    background-color: #b4b9c1;
}
.address .end {
    margin-left: auto;
}
.more {
    font-size: 8px;
}
.sep {
    border: 2px solid transparent;
    border-left: 3px solid #111;
    border-right: 0;
}
.refresh {
    align-self: stretch;
    width: 14px;
    display: grid;
    place-items: center;
    border-left: 1px solid #7a8591;
    background-color: #bcc5d0;
}
.refresh svg, .search svg {
    width: 9px;
    height: 9px;
}
.search {
    display: flex;
    align-items: center;
    width: 26%;
    height: 12px;
    margin-left: 2px;
    padding: 0 2px 0 4px;
    border: 1px solid #6d7885;
    background-color: #b9bdc4;
}
.search input {
    flex: 1;
    min-width: 0;
    outline: 0;
}
.search input::placeholder {
    color: #5b6068;
    font-style: italic;
    opacity: 1;
}
.inner {
    flex: 1;
    min-height: 0;
    display: flex;
    flex-direction: column;
    border: 1px solid #8b9aab;
    background-color: #fcfcfc;
}
.toolbar {
    display: flex;
    align-items: center;
    gap: 15px;
    height: 17px;
    padding: 0 7px 0 8px;
    color: #1e3959;
    background: linear-gradient(#fafcfe, #e6eff9 50%, #d9e6f4);
    border-bottom: 1px solid #c4d3e4;
}
.toolbar button {
    display: flex;
    align-items: center;
    gap: 2px;
}
.tools {
    display: flex;
    align-items: center;
    gap: 10px;
    margin-left: auto;
}
.toolbar .view {
    margin-left: 2px;
}
.panes {
    flex: 1;
    min-height: 0;
    display: flex;
}
.tree {
    width: 158px;
    border-right: 1px solid #dfe8f2;
    padding-top: 3px;
    overflow: hidden;
}
.tree ul {
    margin-bottom: 11px;
}
.tree li {
    display: flex;
    align-items: center;
    gap: 2px;
    height: 11px;
    padding-left: 15px;
    white-space: nowrap;
}
.tree .group {
    padding-left: 9px;
}
.tree .current {
    background-color: #ececec;
}
.files {
    flex: 1;
    padding: 0 13px 0 8px;
}
table {
    width: 100%;
    table-layout: fixed;
    border-collapse: collapse;
}
.c-name {
    width: 45%;
}
.c-date {
    width: 21%;
}
.c-type {
    width: 21%;
}
th, td {
    height: 11px;
    padding: 0 3px;
    font-weight: normal;
    text-align: left;
    white-space: nowrap;
    color: #5d5d5d;
}
th {
    position: relative;
    height: 15px;
    padding-bottom: 3px;
    color: #4c607a;
    border-right: 1px solid #e2eaf3;
}
th:first-child {
    padding-left: 0;
}
.sort {
    position: absolute;
    left: 50%;
    top: 0;
    border: 2px solid transparent;
    border-top: 0;
    border-bottom: 2px solid #7da2c4;
}
td:first-child {
    display: flex;
    align-items: center;
    gap: 2px;
    padding-left: 0;
    color: #111;
}
td:last-child {
    text-align: right;
    padding-right: 1px;
}
.selected {
    background: linear-gradient(#f6f6f6, #e4e4e4);
}
.details {
    display: flex;
    align-items: center;
    gap: 6px;
    height: 27px;
    padding: 0 0 2px 9px;
    background-color: #f0f5fb;
    border-top: 1px solid #d3dfec;
    color: #1e3350;
}
.thumb {
    width: 24px;
    height: 23px;
}
.facts {
    display: grid;
    grid-template-columns: 42px 44px 68px 46px auto;
    column-gap: 3px;
    row-gap: 1px;
    white-space: nowrap;
}
.facts strong {
    font-weight: normal;
}
.key {
    text-align: right;
}
.key, .kind {
    color: #64758a;
}

/* Error message */
.dialog {
    left: 378px;
    top: 236px;
    width: 249px;
    height: 95px;
    padding: 0 3px 3px;
    border: 1px solid #8fb0d8;
    background: linear-gradient(90deg, #1a4a8c 0, #0b2f68 38%, #4a7abd 43%, #5f8dcc 70%, #4a7abf 100%);
    box-shadow: 1px 2px 5px #000;
}
.titlebar {
    display: flex;
    justify-content: space-between;
    align-items: center;
    height: 14px;
    background: linear-gradient(90deg, #8ba3c6 0, #8099c0 12%, rgba(70, 110, 165, 0.5) 25%, transparent 38%);
}
.titlebar h1 {
    margin: 0;
    font-size: 6px;
    font-weight: normal;
    color: #000;
}
.close {
    align-self: flex-start;
    display: grid;
    place-items: center;
    width: 25px;
    height: 9px;
    border: 1px solid #7c2c2c;
    border-top: 0;
    border-radius: 0 0 3px 3px;
    background: linear-gradient(#e0a092, #c43c26 50%, #d4583c);
}
.close svg {
    width: 10px;
    height: 8px;
}
.message {
    flex: 1;
    display: flex;
    gap: 5px;
    padding: 14px 12px 0;
    background-color: #fff;
}
.error {
    width: 17px;
    height: 17px;
}
.message p {
    margin: 0;
    white-space: nowrap;
}
.actions {
    display: flex;
    justify-content: flex-end;
    align-items: center;
    height: 25px;
    padding-right: 5px;
    background-color: #f0f0f0;
}
.actions button {
    width: 46px;
    height: 13px;
    background-color: #f0f0f0;
    border: 1px solid #777;
    box-shadow: inset -1px -1px #888, inset 1px 1px #fff;
}

/* Taskbar */
.taskbar {
    display: flex;
    align-items: center;
    gap: 2px;
    height: 20px;
    padding-left: 1px;
    background: linear-gradient(90deg, #0a3565, #092a5c 40%, #06224c 70%, #0c3a74 90%, #0a2a58);
    border-top: 1px solid #1c3c68;
    color: #fff;
}
.taskbar button {
    display: grid;
    place-items: center;
    width: 31px;
    height: 20px;
}
.taskbar button svg {
    width: 16px;
    height: 16px;
}
.taskbar .start {
    width: 25px;
}
.taskbar .start svg {
    width: 19px;
    height: 19px;
}
.taskbar .open {
    border: 1px solid #6c88ac;
    border-radius: 2px;
    background: linear-gradient(135deg, #8ca2be, #3a5a86 50%, #25477a);
}
.taskbar .stack {
    border-right: 3px double #7590b2;
}
.taskbar .active {
    background: linear-gradient(#b4c1d2, #7289a8);
}
.tray {
    display: flex;
    align-items: center;
    gap: 3px;
}
.tray svg {
    width: 9px;
    height: 9px;
}
.up {
    margin-right: 4px;
    border: 2px solid transparent;
    border-top: 0;
    border-bottom: 2px solid #fff;
}
.clock {
    margin: 0 3px 0 4px;
    text-align: center;
}
.taskbar .peek {
    width: 7px;
    border: 1px solid #47658c;
    background: linear-gradient(#35557f, #0c2a55);
}
```
